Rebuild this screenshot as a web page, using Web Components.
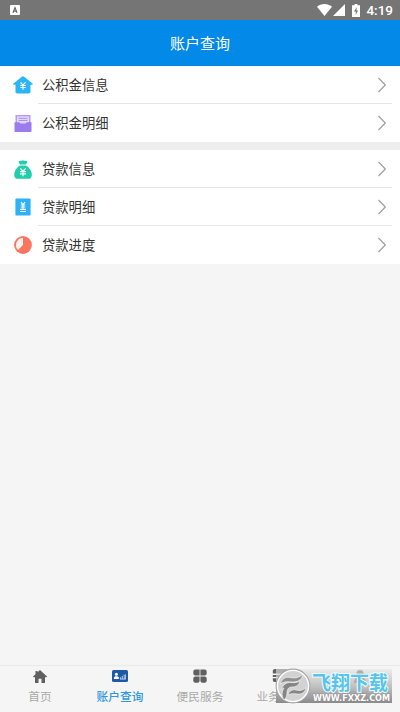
<!DOCTYPE html>
<html lang="zh-CN">
<head>
<meta charset="utf-8">
<title>账户查询</title>
<style>
    body{
        margin: 0;
        background: #f5f5f5;
        font-family: "Noto Sans CJK SC", "Noto Sans", sans-serif;
    }
</style>
</head>
<body>
<account-app></account-app>

<script>
const icons = {
    house: `<svg width="20" height="18" viewBox="0 0 20 18"><path d="M10 .2c.5 0 .8.2 1.2.5l8.3 6.7c.6.5.3 1.4-.4 1.4h-1.6v6.9c0 1-.7 1.7-1.7 1.7H4.2c-1 0-1.7-.7-1.7-1.7V8.8H.9c-.7 0-1-.9-.4-1.4L8.8.7c.4-.3.7-.5 1.2-.5z" fill="#2cb5f5"/><path d="M7.5 6.3 10 9.2l2.5-2.9M10 9.2v4.6M7.3 9.5h5.4M7.3 11.5h5.4" fill="none" stroke="#fff" stroke-width="1.1"/></svg>`,
    drawer: `<svg width="18" height="17" viewBox="0 0 18 17"><path d="M1.5 0h15v9h-15z" fill="#b69cf3"/><path d="M3 1.4h12V9H3z" fill="#e2d8fc"/><path d="M4.6 3.4h8.8M4.6 5.5h8.8" stroke="#a58aee" stroke-width=".9"/><path d="M.5 7.2h4.8l1.2 1.4h5l1.2-1.4h4.8V16c0 .6-.4 1-1 1h-15c-.6 0-1-.4-1-1z" fill="#9b7bee"/></svg>`,
    bag: `<svg width="18" height="19" viewBox="0 0 18 19"><path d="M4.6 1.4C5.8 0 6.8 1 7.5.8 8.4.4 9.4.4 10.4.8c.8.2 1.8-.8 3 .6.3.5-.9 1.5-1.4 3H6c-.5-1.5-1.7-2.5-1.4-3z" fill="#20ceac"/><path d="M6 5.4h6c3.5 2.1 5.8 5.7 5.8 9.5 0 2.4-1.2 3.9-3.5 3.9H3.7C1.4 18.8.2 17.3.2 14.9.2 11.1 2.5 7.5 6 5.4z" fill="#20ceac"/><path d="M6.4 8.3 9 11.5l2.6-3.2M9 11.5v4.8M6 11.6h6M6 13.9h6" fill="none" stroke="#fff" stroke-width="1.2"/></svg>`,
    bill: `<svg width="16" height="18" viewBox="0 0 16 18"><rect x=".4" y=".4" width="15.2" height="17.2" rx="1.2" fill="#2cb2f5"/><path d="M6 4.2 8 6.7l2-2.5M8 6.7v4M5.7 7h4.6M5.7 9h4.6M5 11.4h6M5 13.5h6" fill="none" stroke="#fff" stroke-width="1.1"/></svg>`,
    pie: `<svg width="18" height="18" viewBox="0 0 18 18"><circle cx="9" cy="9" r="8.9" fill="#f8765f"/><path d="M9 2v7l-5 4.9A7 7 0 0 1 9 2z" fill="#fff1ee"/></svg>`,
    home: `<svg width="14" height="13" viewBox="0 0 14 13"><path d="M7 0 14 6.6l-.6.7H12V13H8.5V8.7h-3V13H2V7.3H.6L0 6.6 2.5 4.2V1h2v1.3z" fill="#606060"/></svg>`,
    card: `<svg width="16" height="12" viewBox="0 0 16 12"><rect width="16" height="12" rx="1.5" fill="#1d5aa5"/><circle cx="4.4" cy="4.3" r="1.5" fill="#fff"/><path d="M2 9V7.7C2 6.7 3 6.2 4.4 6.2s2.4.5 2.4 1.5V9z" fill="#fff"/><path d="M8.4 9V7.1M10.3 9V5.9M12.2 9V4.6M8 9.1h5.8M13.4 9V4.4" stroke="#bdd3ea" stroke-width=".9"/></svg>`,
    grid: `<svg width="14" height="14" viewBox="0 0 14 14" fill="#606060"><path d="M2.3.4h4.3v6.2H2.3a2 2 0 0 1-2-2V2.4a2 2 0 0 1 2-2zM7.4.4h4.3a2 2 0 0 1 2 2v2.2a2 2 0 0 1-2 2H7.4zM.3 9.4a2 2 0 0 1 2-2h4.3v4.3a2 2 0 0 1-2 2H2.3a2 2 0 0 1-2-2zM7.4 7.4h4.3a2 2 0 0 1 2 2v2.3a2 2 0 0 1-2 2H9.4a2 2 0 0 1-2-2z"/></svg>`,
    service: `<svg width="16" height="14" viewBox="0 0 16 14" fill="#606060"><path d="M3 0h12v4.6H.8V2.2C.8.9 1.7 0 3 0zM.8 6h14.4v2H.8zM.8 9.2h14.4V13H3C1.7 13 .8 12.1.8 10.9z"/></svg>`,
    person: `<svg width="14" height="13" viewBox="0 0 14 13" fill="#606060"><circle cx="7" cy="3.5" r="3.5"/><path d="M1 13c0-4 2.5-6 6-6s6 2 6 6z"/></svg>`
};

class StatusBar extends HTMLElement {
    connectedCallback(){
        this.attachShadow({ mode: 'open' }).innerHTML = `
<style>
    :host{
        display: flex;
        align-items: center;
        height: 20px;
        box-sizing: border-box;
        padding: 0 7px 0 10px;
        background: #757575;
        color: #fff;
        font: 500 13.5px/20px Roboto, sans-serif;
    }
    svg{ display: block; }
    .wifi{ margin-left: auto; }
    .signal{ margin-left: 1px; }
    .battery{ margin: 0 6px 0 7px; }
</style>
<svg width="10" height="10" viewBox="0 0 10 10"><rect width="10" height="10" rx="1" fill="#fff"/><path d="M3 7.7 5 2.6l2 5.1M3.7 6.1h2.6" fill="none" stroke="#666" stroke-width="1.2"/></svg>
<svg class="wifi" width="15" height="12" viewBox="0 0 15 12"><path d="M0 2.7C4-.8 11-.8 15 2.7L7.5 12z" fill="#fff"/></svg>
<svg class="signal" width="12" height="12" viewBox="0 0 12 12"><path d="M12 0v12H0z" fill="#fff"/></svg>
<svg class="battery" width="8" height="13" viewBox="0 0 8 13"><path d="M2.5 0h3v1.2H8V13H0V1.2h2.5z" fill="#fff"/><path d="M4.8 3 2 7.5h1.8V11L6 6.5H4.4z" fill="#757575"/></svg>
<span>4:19</span>`;
    }
}
customElements.define('status-bar', StatusBar);

class TitleBar extends HTMLElement {
    connectedCallback(){
        this.attachShadow({ mode: 'open' }).innerHTML = `
<style>
    :host{
        display: flex;
        align-items: center;
        justify-content: center;
        height: 46px;
        background: #0389e8;
        color: #fff;
        font-size: 15px;
        line-height: 46px;
    }
</style>
<slot></slot>`;
    }
}
customElements.define('title-bar', TitleBar);

class MenuGroup extends HTMLElement {
    connectedCallback(){
        this.attachShadow({ mode: 'open' }).innerHTML = `
<style>
    :host{
        display: block;
        background: #fff;
    }
</style>
<slot></slot>`;
    }
}
customElements.define('menu-group', MenuGroup);

class MenuItem extends HTMLElement {
    connectedCallback(){
        const icon = this.getAttribute('icon');
        this.attachShadow({ mode: 'open' }).innerHTML = `
<style>
    :host{
        display: flex;
        height: 38px;
        padding: 0 8px;
        color: #333;
        font-size: 13.3px;
    }
    :host(:last-child) .body{ border-bottom-color: transparent; }
    .icon{
        display: flex;
        align-items: center;
        justify-content: center;
        width: 30px;
    }
    .body{
        display: flex;
        align-items: center;
        justify-content: space-between;
        flex-grow: 1;
        padding: 0 6px 0 4px;
        border-bottom: 1px solid #e6e6e6;
    }
</style>
<div class="icon">${icons[icon]}</div>
<div class="body">
    <slot></slot>
    <svg width="8" height="16" viewBox="0 0 8 16"><path d="M.5 1 7.3 8 .5 15" fill="none" stroke="#a0a0a0" stroke-width="1.2"/></svg>
</div>`;
    }
}
customElements.define('menu-item', MenuItem);

class TabItem extends HTMLElement {
    connectedCallback(){
        const icon = this.getAttribute('icon');
        this.attachShadow({ mode: 'open' }).innerHTML = `
<style>
    :host{
        display: flex;
        flex-direction: column;
        align-items: center;
        width: 80px;
        color: #aaa;
        font-size: 11.7px;
        line-height: 18px;
    }
    :host([active]){
        color: #2f98de;
        font-weight: 500;
    }
    .icon{
        display: flex;
        align-items: center;
        height: 14px;
        margin: 3px 0 4px;
    }
</style>
<div class="icon">${icons[icon]}</div>
<slot></slot>`;
    }
}
customElements.define('tab-item', TabItem);

class SiteMark extends HTMLElement {
    connectedCallback(){
        this.attachShadow({ mode: 'open' }).innerHTML = `
<style>
    :host{
        position: absolute;
        right: 8px;
        bottom: 9px;
        display: flex;
        align-items: center;
        width: 116px;
        height: 34px;
        background: linear-gradient(rgba(228,228,228,.6), rgba(185,185,185,.85) 50%, rgba(133,133,133,.95));
    }
    .logo{
        flex: none;
        margin-left: -1px;
    }
    svg{ display: block; }
    text{ paint-order: stroke; }
    .name{
        font: 700 19px "Noto Sans CJK SC", sans-serif;
        fill: #58c4ea;
        stroke: #eefaff;
        stroke-width: 2px;
    }
    .url{
        font: bold 8px "DejaVu Sans", sans-serif;
        fill: #fff;
        stroke: #808080;
        stroke-width: .5px;
    }
</style>
<svg class="logo" width="36" height="36" viewBox="0 0 36 36">
    <circle cx="18" cy="18" r="16.6" fill="#d2d2d2" stroke="#a5a5a5" stroke-width="1.6"/>
    <circle cx="18" cy="18" r="15.6" fill="none" stroke="#fff" stroke-width="1.4"/>
    <path d="M5 16c2-5 5-7.500 10-6.500 6 1.200 9 0 13-3.500-1 5-4 8-10 8-5 0-8-1-13 2z" fill="#909090" stroke="#f4f4f4" stroke-width=".7"/>
    <path d="M6 22c2-5 5-8 10-7.500 4 .5 7 0 9-2-1 5-4 6.500-8 6.500-4 0-5 3-5 6 0 3-1 5-3 7-2-3-3-7 0-12-1 0-2 1-3 2z" fill="#858585" stroke="#f4f4f4" stroke-width=".7"/>
    <path d="M13 27c1-4 4-6 8-5 4 1 7 .5 10-2.500-1 5-4 7-9 6.500-4-.500-6-.500-9 1z" fill="#858585" stroke="#f4f4f4" stroke-width=".7"/>
</svg>
<svg width="81" height="35" viewBox="0 0 81 35">
    <text class="name" x="1" y="21" textLength="76" lengthAdjust="spacingAndGlyphs">飞翔下载</text>
    <text class="url" x="2" y="32" textLength="77" lengthAdjust="spacingAndGlyphs">WWW.FXXZ.COM</text>
</svg>`;
    }
}
customElements.define('site-mark', SiteMark);

class AccountApp extends HTMLElement {
    connectedCallback(){
        this.attachShadow({ mode: 'open' }).innerHTML = `
<style>
    :host{
        position: relative;
        display: flex;
        flex-direction: column;
        width: 400px;
        height: 712px;
        overflow: hidden;
        background: #f5f5f5;
    }
    main{ flex-grow: 1; }
    .lists{
        display: flex;
        flex-direction: column;
        gap: 8px;
        background: #eee;
    }
    nav{
        display: flex;
        height: 46px;
        border-top: 1px solid #e9e9e9;
    }
</style>
<status-bar></status-bar>
<title-bar>账户查询</title-bar>
<main>
    <div class="lists">
        <menu-group>
            <menu-item icon="house">公积金信息</menu-item>
            <menu-item icon="drawer">公积金明细</menu-item>
        </menu-group>
        <menu-group>
            <menu-item icon="bag">贷款信息</menu-item>
            <menu-item icon="bill">贷款明细</menu-item>
            <menu-item icon="pie">贷款进度</menu-item>
        </menu-group>
    </div>
</main>
<nav>
    <tab-item icon="home">首页</tab-item>
    <tab-item icon="card" active>账户查询</tab-item>
    <tab-item icon="grid">便民服务</tab-item>
    <tab-item icon="service">业务办理</tab-item>
    <tab-item icon="person">我的</tab-item>
</nav>
<site-mark></site-mark>`;
    }
}
customElements.define('account-app', AccountApp);
</script>
</body>
</html>
